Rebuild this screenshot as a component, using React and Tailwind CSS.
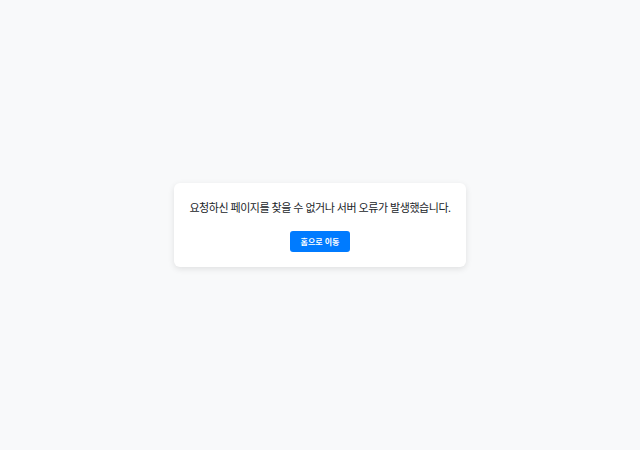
export default function App() {
  return (
    <div className="min-h-screen w-full bg-[#f8f9fa] flex items-center justify-center"
         style={{ fontFamily: '"Noto Sans", "Noto Sans CJK KR", sans-serif' }}>
      <div className="bg-white rounded-md shadow-[0_2px_6px_rgba(0,0,0,0.1)] px-[15px] pt-[16px] pb-[15px] flex flex-col items-center">
        <p className="text-[11px] leading-[18px] tracking-[-0.45px] text-[#212529] whitespace-nowrap">
          요청하신 페이지를 찾을 수 없거나 서버 오류가 발생했습니다.
        </p>
        <button className="mt-[14px] w-[60px] h-[21px] rounded-[3px] bg-[#007bff] text-white text-[8px] font-bold leading-none">
          홈으로 이동
        </button>
      </div>
    </div>
  )
}
